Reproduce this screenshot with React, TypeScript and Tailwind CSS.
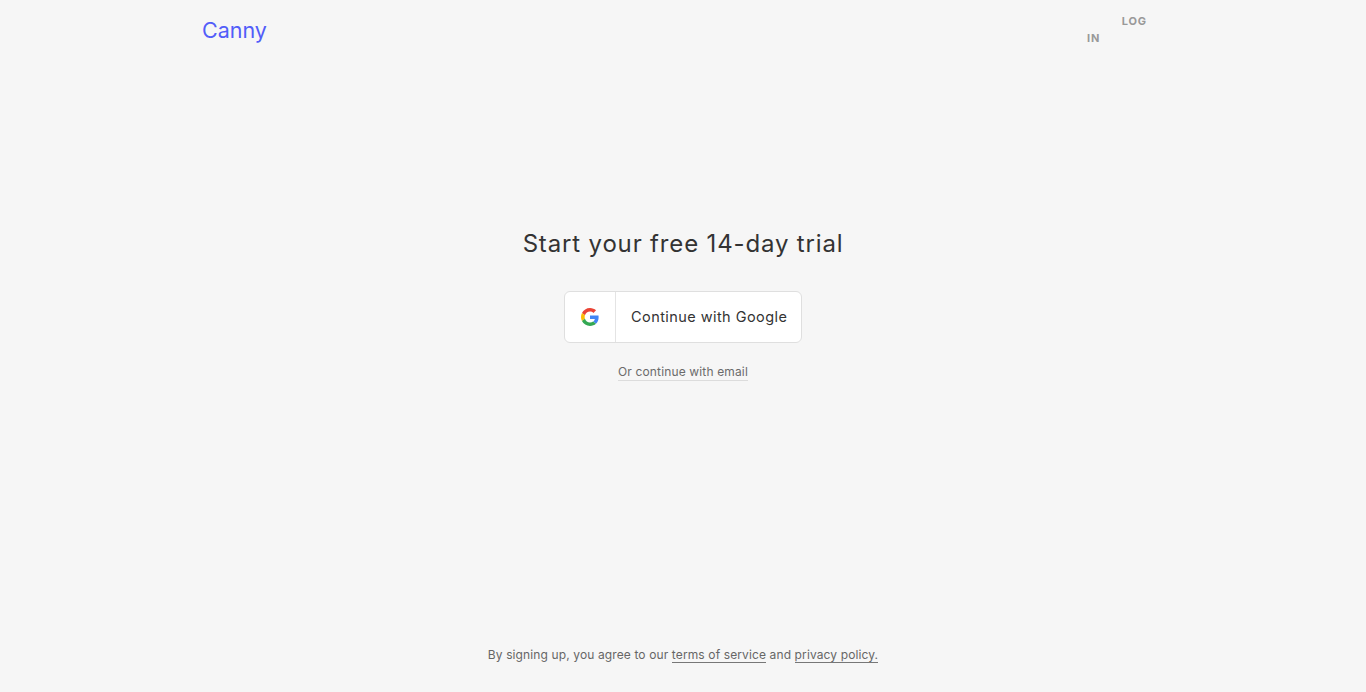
const font = "font-['Inter',sans-serif]";

function GoogleIcon() {
  return (
    <svg viewBox="0 0 48 48" className="h-[18px] w-[18px]">
      <path fill="#EA4335" d="M24 9.5c3.54 0 6.71 1.22 9.21 3.6l6.85-6.85C35.9 2.38 30.47 0 24 0 14.62 0 6.51 5.38 2.56 13.22l7.98 6.19C12.43 13.72 17.74 9.5 24 9.5z" />
      <path fill="#4285F4" d="M46.98 24.55c0-1.57-.15-3.09-.38-4.55H24v9.02h12.94c-.58 2.96-2.26 5.48-4.78 7.18l7.73 6c4.51-4.18 7.09-10.36 7.09-17.65z" />
      <path fill="#FBBC05" d="M10.53 28.59c-.48-1.45-.76-2.99-.76-4.59s.27-3.14.76-4.59l-7.98-6.19C.92 16.46 0 20.12 0 24c0 3.88.92 7.54 2.56 10.78l7.97-6.19z" />
      <path fill="#34A853" d="M24 48c6.48 0 11.93-2.13 15.89-5.81l-7.73-6c-2.15 1.45-4.92 2.3-8.16 2.3-6.26 0-11.57-4.22-13.47-9.91l-7.98 6.19C6.51 42.62 14.62 48 24 48z" />
    </svg>
  );
}

export default function App() {
  return (
    <div className={`${font} flex h-[692px] flex-col bg-[#f6f6f6] text-[#333333]`}>
      <header className="flex h-[60px] items-start justify-between pl-[202px] pr-[219px]">
        <div className="pt-[16px] text-[21.5px] leading-[28px] text-[#525df9]">Canny</div>
        <div className="flex w-[60px] flex-col pt-[13px] text-[11px] font-bold leading-[17px] tracking-[0.08em] text-[#999999]">
          <span className="self-end">LOG</span>
          <span className="self-start">IN</span>
        </div>
      </header>

      <main className="flex flex-1 flex-col items-center">
        <h1 className="mt-[166px] text-[24px] font-normal leading-[36px] tracking-[0.035em]">
          Start your free 14-day trial
        </h1>
        <button className="mt-[29px] flex h-[52px] w-[238px] items-stretch rounded-[6px] border border-[#dfdfdf] bg-white">
          <span className="flex w-[51px] items-center justify-center border-r border-[#e4e4e4]">
            <GoogleIcon />
          </span>
          <span className="flex flex-1 items-center pl-[15px] text-[14.5px] tracking-[0.03em]">
            Continue with Google
          </span>
        </button>
        <a className="mt-[20px] border-b border-[#dcdcdc] text-[12px] leading-[17px] tracking-[0.012em] text-[#6b6b6b]">
          Or continue with email
        </a>
      </main>

      <footer className="flex h-[46px] justify-center text-[12px] leading-[18px] tracking-[0.01em] text-[#666666]">
        <p>
          By signing up, you agree to our{" "}
          <a className="border-b border-[#777777]">terms of service</a> and{" "}
          <a className="border-b border-[#777777]">privacy policy.</a>
        </p>
      </footer>
    </div>
  );
}
